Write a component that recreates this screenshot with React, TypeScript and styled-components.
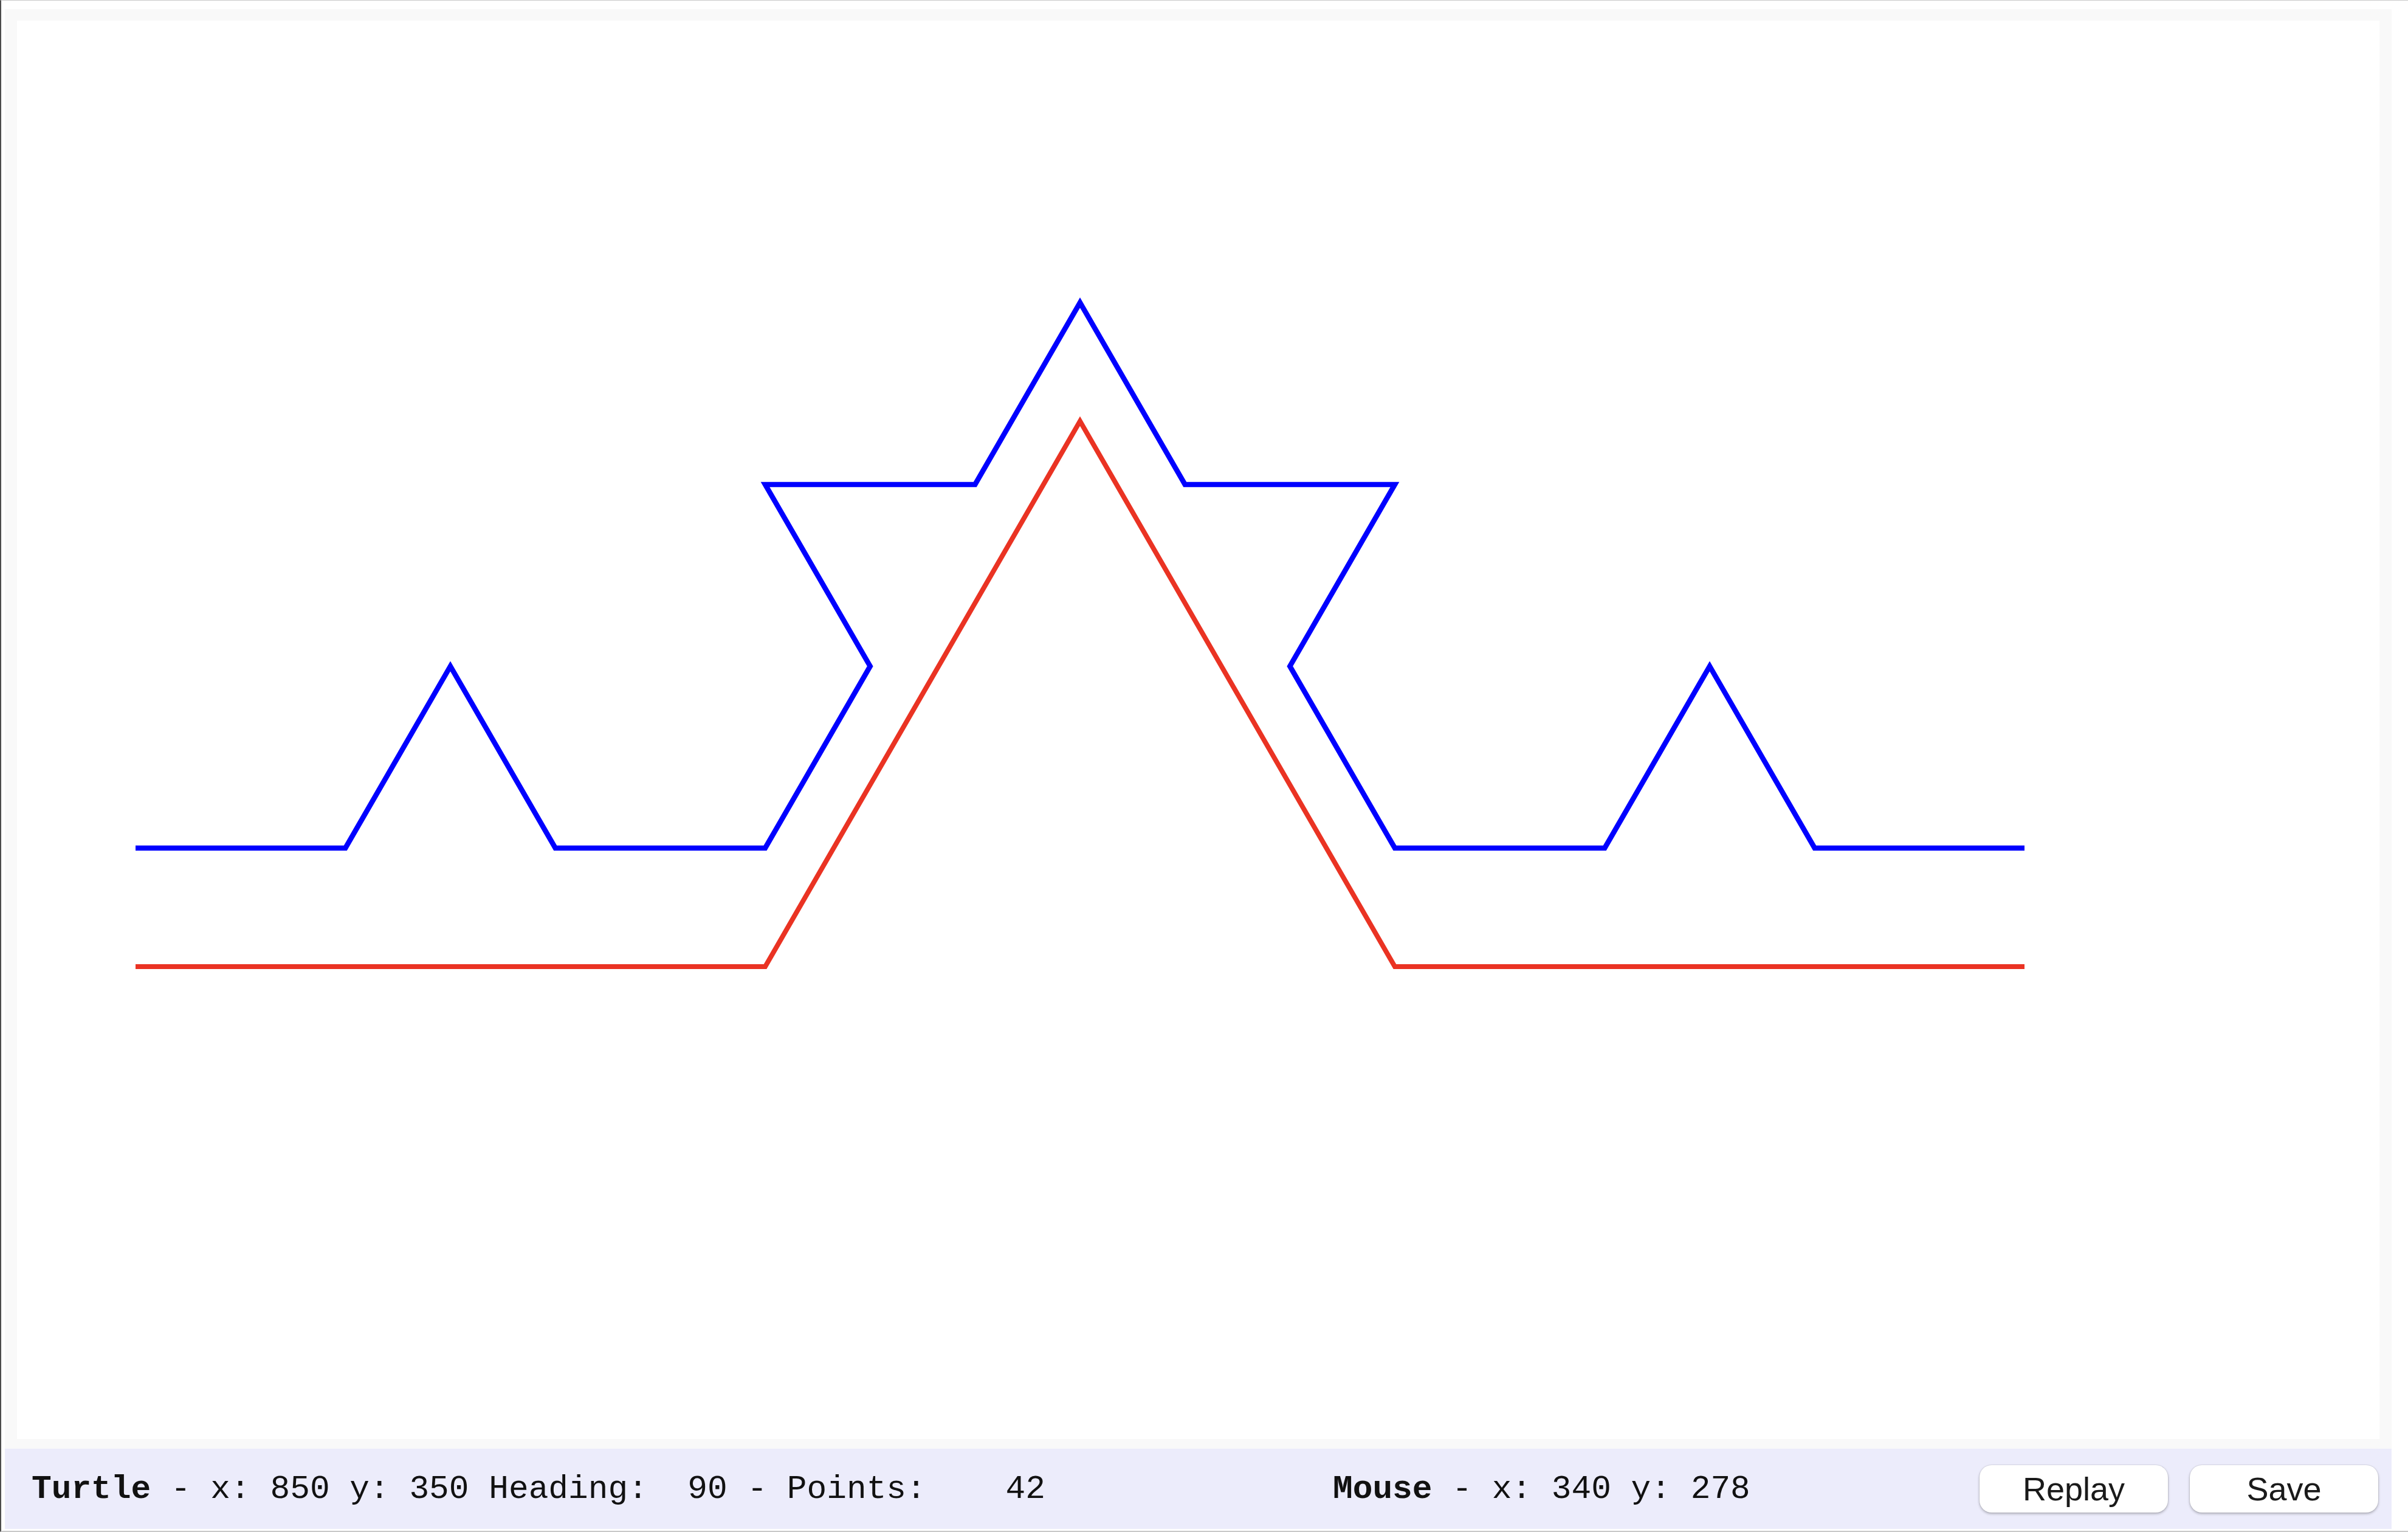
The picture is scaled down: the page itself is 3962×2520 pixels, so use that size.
import styled, { createGlobalStyle } from "styled-components";

const GlobalStyle = createGlobalStyle`
	html, body {
		margin: 0;
		padding: 0;
		background: #ffffff;
	}
`;

type Pt = [number, number];

// turtle walk for a koch curve, heading 0 = east, y grows downwards
const koch = (level: number, length: number, start: Pt): Pt[] => {
	const pts: Pt[] = [start];
	let x = start[0];
	let y = start[1];
	let heading = 0;
	const walk = (lvl: number, len: number) => {
		if (lvl === 0) {
			x += len * Math.cos((heading * Math.PI) / 180);
			y -= len * Math.sin((heading * Math.PI) / 180);
			pts.push([x, y]);
			return;
		}
		const part = len / 3;
		walk(lvl - 1, part);
		heading += 60;
		walk(lvl - 1, part);
		heading -= 120;
		walk(lvl - 1, part);
		heading += 60;
		walk(lvl - 1, part);
	};
	walk(level, length);
	return pts;
};

const toPoints = (pts: Pt[]) => pts.map(([x, y]) => `${x.toFixed(1)},${y.toFixed(1)}`).join(" ");

const Window = styled.div`
	width: 3962px;
	height: 2520px;
	box-sizing: border-box;
	border-top: 1px solid #c9c9c9;
	border-left: 2px solid #4c4c4c;
	border-bottom: 2px solid #c9c9c9;
	padding: 14px 0 3px 6px;
	display: flex;
	flex-direction: column;
`;

const Panel = styled.div`
	width: 3927px;
	height: 2368px;
	box-sizing: border-box;
	padding: 19px 20px 16px 20px;
	background: #f9f9f9;
`;

const Canvas = styled.div`
	width: 3887px;
	height: 2333px;
	background: #ffffff;
	& > svg {
		display: block;
	}
`;

const StatusBar = styled.div`
	width: 3927px;
	height: 132px;
	box-sizing: border-box;
	padding: 0 22px 0 44px;
	background: #ececfb;
	display: flex;
	align-items: center;
`;

const Readout = styled.span<{ $width?: number }>`
	font-family: "Liberation Mono", "DejaVu Sans Mono", monospace;
	font-size: 54.5px;
	color: #111111;
	white-space: pre;
	width: ${(p) => (p.$width ? `${p.$width}px` : "auto")};
	& > b {
		font-weight: 700;
	}
`;

const ButtonGroup = styled.div`
	margin-left: auto;
	display: flex;
	gap: 36px;
`;

const Button = styled.button`
	width: 310px;
	height: 78px;
	border: none;
	border-radius: 20px;
	background: #ffffff;
	box-shadow: 0 0 0 1px rgba(0, 0, 0, 0.06), 0 2px 4px rgba(0, 0, 0, 0.28);
	font-family: "Liberation Sans", Arial, sans-serif;
	font-size: 54px;
	color: #1a1a1a;
	padding: 0;
	cursor: pointer;
`;

const blue = koch(2, 3108, [223, 1395]);
const red = koch(1, 3108, [223, 1590]);

const App = () => {
	return (
		<>
			<GlobalStyle />
			<Window>
				<Panel>
					<Canvas>
						<svg width="3887" height="2333" viewBox="28 34 3887 2333">
							<polyline points={toPoints(blue)} fill="none" stroke="#0000ff" strokeWidth="8.5" strokeLinejoin="miter" />
							<polyline points={toPoints(red)} fill="none" stroke="#ea3323" strokeWidth="8" strokeLinejoin="miter" />
						</svg>
					</Canvas>
				</Panel>
				<StatusBar>
					<Readout $width={2141}>
						<b>Turtle</b>{" - x: 850 y: 350 Heading:  90 - Points:    42"}
					</Readout>
					<Readout>
						<b>Mouse</b>{" - x: 340 y: 278"}
					</Readout>
					<ButtonGroup>
						<Button>Replay</Button>
						<Button>Save</Button>
					</ButtonGroup>
				</StatusBar>
			</Window>
		</>
	);
};

export default App;
